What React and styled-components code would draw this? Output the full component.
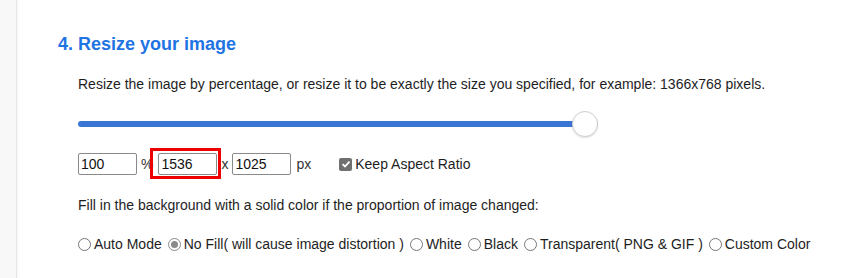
import React, { useState } from "react";
import styled, { createGlobalStyle } from "styled-components";

const GlobalStyle = createGlobalStyle`
  html, body {
    margin: 0;
    padding: 0;
    background: #ffffff;
    font-family: "Liberation Sans", Arial, sans-serif;
  }
`;

const Page = styled.div`
  display: flex;
  width: 847px;
  height: 278px;
  overflow: hidden;
`;

const Sidebar = styled.div`
  width: 16px;
  flex-shrink: 0;
  background: #f8f8f8;
  border-right: 1px solid #e6e6e6;
  box-shadow: 1px 0 2px rgba(0, 0, 0, 0.04);
`;

const Panel = styled.div`
  flex: 1;
  padding: 34px 0 0 41px;
  color: #1e1e1e;
  font-size: 14px;
`;

const Title = styled.h2`
  margin: 0;
  font-size: 18px;
  font-weight: bold;
  color: #1f74e3;
  line-height: 20px;
`;

const Body = styled.div`
  padding-left: 20px;
`;

const Paragraph = styled.p`
  margin: ${({ $top }) => $top}px 0 0;
  line-height: 16px;
`;

const SliderWrap = styled.div`
  position: relative;
  width: 520px;
  height: 26px;
  margin-top: 19px;
  display: flex;
  align-items: center;
`;

const Track = styled.div`
  width: 100%;
  height: 6px;
  border-radius: 3px;
  background: #3b75d3;
`;

const Thumb = styled.div`
  position: absolute;
  right: 0;
  top: 0;
  width: 24px;
  height: 24px;
  border-radius: 50%;
  background: #fff;
  border: 1px solid #d0d0d0;
  box-shadow: 0 1px 2px rgba(0, 0, 0, 0.12);
`;

const SizeRow = styled.div`
  display: flex;
  align-items: center;
  margin-top: 15px;
  height: 24px;
`;

const NumberBox = styled.input`
  box-sizing: border-box;
  width: 59px;
  height: 22px;
  border: 1px solid #8a8a8a;
  border-radius: 2px;
  padding: 0 2px;
  font-family: "Liberation Sans", Arial, sans-serif;
  font-size: 14px;
  color: #111;
  outline: none;
`;

const Marked = styled.span`
  position: relative;
  display: flex;
  &::after {
    content: "";
    position: absolute;
    left: -8px;
    right: -4px;
    top: -5px;
    bottom: -4px;
    border: 3px solid #ee0000;
    pointer-events: none;
  }
`;

const Unit = styled.span`
  margin: 0 ${({ $right }) => $right}px 0 ${({ $left }) => $left}px;
  color: #333;
`;

const CheckLabel = styled.label`
  display: flex;
  align-items: center;
  gap: 3px;
  margin-left: 28px;
`;

const CheckBox = styled.span`
  width: 13px;
  height: 13px;
  border-radius: 2px;
  background: #707070;
  display: flex;
  align-items: center;
  justify-content: center;
`;

const RadioRow = styled.div`
  display: flex;
  align-items: center;
  margin-top: 23px;
  white-space: nowrap;
`;

const RadioLabel = styled.label`
  display: flex;
  align-items: center;
  gap: 3px;
  margin-right: 6px;
`;

const RadioDot = styled.span`
  box-sizing: border-box;
  width: 13px;
  height: 13px;
  border-radius: 50%;
  border: 1px solid ${({ $on }) => ($on ? "#8a8a8a" : "#767676")};
  background: #fff;
  display: flex;
  align-items: center;
  justify-content: center;
  &::after {
    content: "";
    display: ${({ $on }) => ($on ? "block" : "none")};
    width: 7px;
    height: 7px;
    border-radius: 50%;
    background: #8a8a8a;
  }
`;

const fillModes = [
  "Auto Mode",
  "No Fill( will cause image distortion )",
  "White",
  "Black",
  "Transparent( PNG & GIF )",
  "Custom Color",
];

export default function App() {
  const [mode, setMode] = useState(1);

  return (
    <Page>
      <GlobalStyle />
      <Sidebar />
      <Panel>
        <Title>4. Resize your image</Title>
        <Body>
          <Paragraph $top={22}>
            Resize the image by percentage, or resize it to be exactly the size
            you specified, for example: 1366x768 pixels.
          </Paragraph>
          <SliderWrap>
            <Track />
            <Thumb />
          </SliderWrap>
          <SizeRow>
            <NumberBox defaultValue="100" />
            <Unit $left={4} $right={5}>%</Unit>
            <Marked>
              <NumberBox defaultValue="1536" />
            </Marked>
            <Unit $left={4} $right={4}>x</Unit>
            <NumberBox defaultValue="1025" />
            <Unit $left={5} $right={0}>px</Unit>
            <CheckLabel>
              <CheckBox>
                <svg width="10" height="10" viewBox="0 0 10 10">
                  <path
                    d="M1.6 5.2 L4 7.5 L8.5 2.6"
                    fill="none"
                    stroke="#fff"
                    strokeWidth="1.8"
                  />
                </svg>
              </CheckBox>
              Keep Aspect Ratio
            </CheckLabel>
          </SizeRow>
          <Paragraph $top={21}>
            Fill in the background with a solid color if the proportion of
            image changed:
          </Paragraph>
          <RadioRow>
            {fillModes.map((label, i) => (
              <RadioLabel key={label} onClick={() => setMode(i)}>
                <RadioDot $on={mode === i} />
                {label}
              </RadioLabel>
            ))}
          </RadioRow>
        </Body>
      </Panel>
    </Page>
  );
}
